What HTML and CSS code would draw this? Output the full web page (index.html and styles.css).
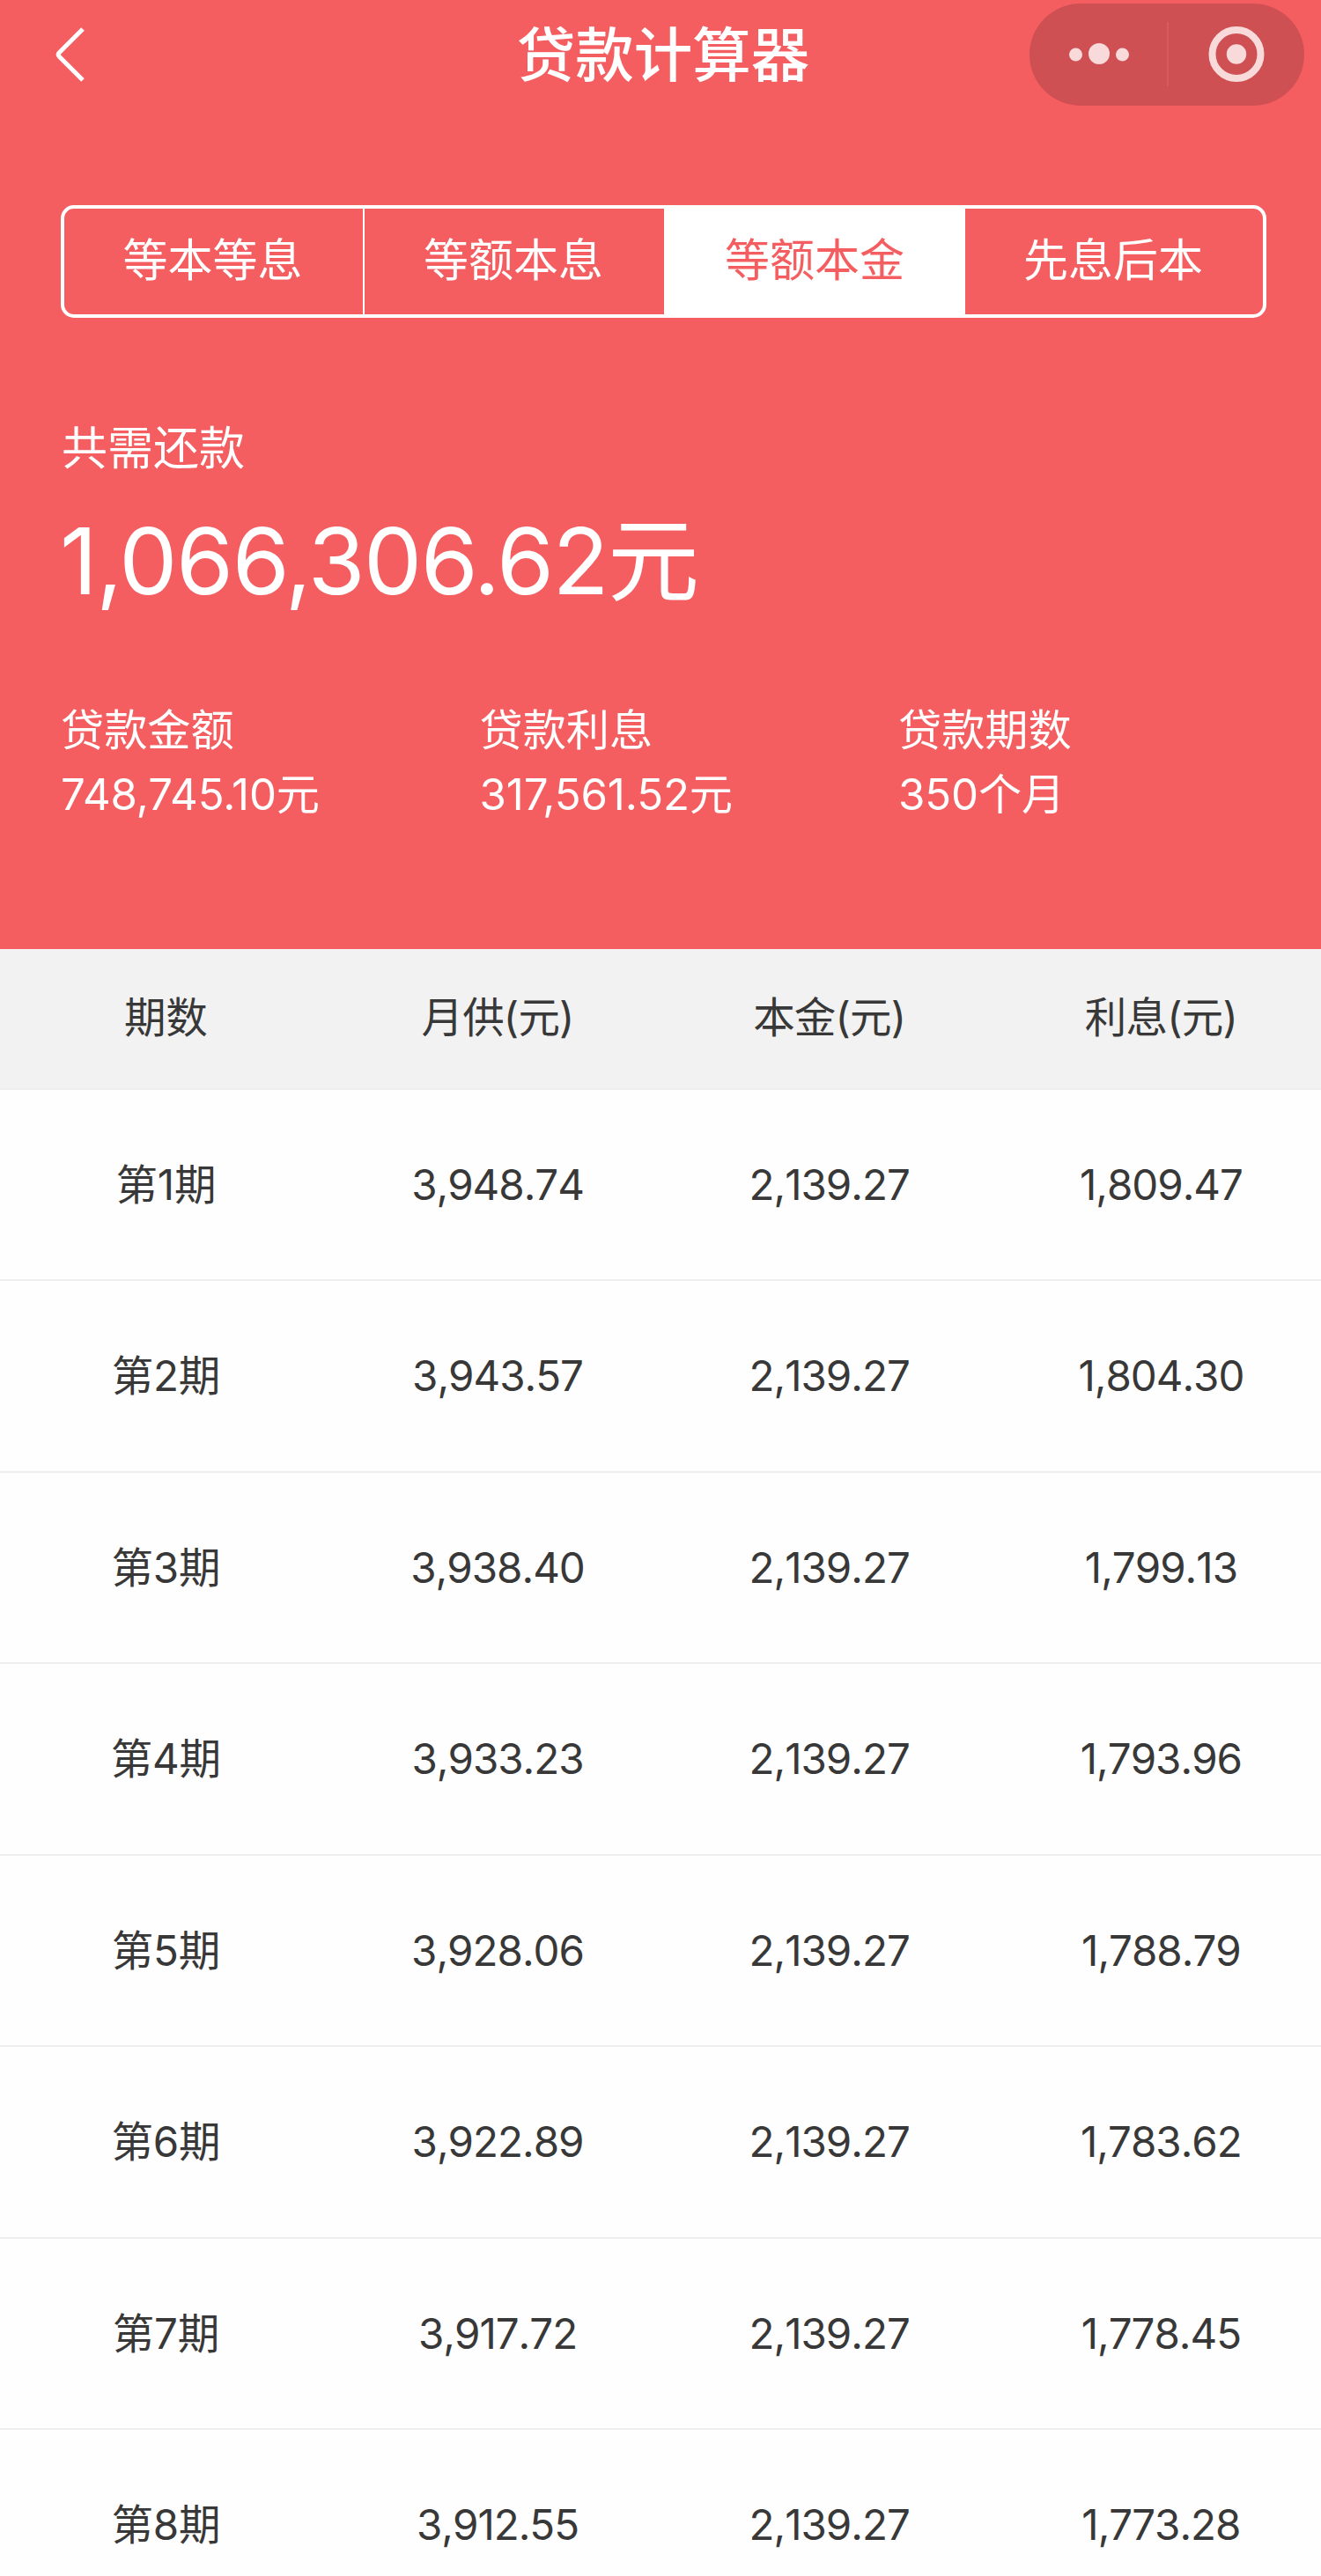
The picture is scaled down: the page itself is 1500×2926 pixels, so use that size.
FILE: index.html
```html
<!DOCTYPE html>
<html lang="zh-CN">
<head>
<meta charset="utf-8">
<title>贷款计算器</title>
<link rel="stylesheet" href="styles.css">
</head>
<body>
<header class="hero">
  <nav class="navbar">
    <svg class="back" width="36" height="64" viewBox="0 0 36 64" fill="none" stroke="#fff" stroke-width="5"><path d="M32 3 5.500 29.500Q3 32 5.500 34.500L32 61"/></svg>
    <h1 class="title">贷款计算器</h1>
    <div class="capsule">
      <svg width="312" height="116" viewBox="0 0 312 116">
        <g fill="#f8dadb"><circle cx="52.500" cy="58" r="7.500"/><circle cx="79" cy="57" r="12"/><circle cx="105.500" cy="58" r="7.500"/><circle cx="235" cy="57.500" r="11.200"/></g>
        <path d="M157 21v73" stroke="#da5b5d" stroke-width="2"/>
        <circle cx="235" cy="57.500" r="27.500" fill="none" stroke="#f8dadb" stroke-width="8"/>
      </svg>
    </div>
  </nav>
  <div class="tabs">
    <div class="tab">等本等息</div>
    <div class="tab">等额本息</div>
    <div class="tab active">等额本金</div>
    <div class="tab">先息后本</div>
  </div>
  <div class="total-label">共需还款</div>
  <div class="total">1,066,306.62<span class="unit">元</span></div>
  <div class="stats">
    <div class="stat"><div>贷款金额</div><div class="value">748,745.10元</div></div>
    <div class="stat"><div>贷款利息</div><div class="value">317,561.52元</div></div>
    <div class="stat"><div>贷款期数</div><div class="value">350个月</div></div>
  </div>
</header>
<main class="table">
  <div class="row head"><span>期数</span><span>月供(元)</span><span>本金(元)</span><span>利息(元)</span></div>
  <div class="row"><span>第1期</span><span>3,948.74</span><span>2,139.27</span><span>1,809.47</span></div>
  <div class="row"><span>第2期</span><span>3,943.57</span><span>2,139.27</span><span>1,804.30</span></div>
  <div class="row"><span>第3期</span><span>3,938.40</span><span>2,139.27</span><span>1,799.13</span></div>
  <div class="row"><span>第4期</span><span>3,933.23</span><span>2,139.27</span><span>1,793.96</span></div>
  <div class="row"><span>第5期</span><span>3,928.06</span><span>2,139.27</span><span>1,788.79</span></div>
  <div class="row"><span>第6期</span><span>3,922.89</span><span>2,139.27</span><span>1,783.62</span></div>
  <div class="row"><span>第7期</span><span>3,917.72</span><span>2,139.27</span><span>1,778.45</span></div>
  <div class="row"><span>第8期</span><span>3,912.55</span><span>2,139.27</span><span>1,773.28</span></div>
</main>
</body>
</html>
```
FILE: styles.css
```css
* { box-sizing: border-box; }
body {
  margin: 0;
  height: 2926px;
  overflow: hidden;
  background: #fefefe;
  color: #383838;
  font-family: Inter, "Noto Sans CJK SC", sans-serif;
}
.hero {
  height: 1077.5px;
  padding-top: 4px;
  background: #f55e60;
  color: #fff;
}
.navbar {
  display: grid;
  grid-template-columns: 312px 1fr 312px;
  align-items: center;
  height: 116px;
  padding: 0 19px;
}
.back { margin-left: 43px; }
.title {
  margin: 0;
  padding: 2px 0 0 6px;
  text-align: center;
  font-size: 66.5px;
  line-height: 80px;
  font-weight: 500;
}
.capsule {
  height: 116px;
  border-radius: 58px;
  background: #cf5052;
}
.capsule svg { display: block; }
.tabs {
  display: grid;
  grid-template-columns: 339px 342px 342px 1fr;
  height: 128px;
  margin: 113px 62px 0 69px;
  border: 4px solid #fff;
  border-radius: 15px;
  overflow: hidden;
}
.tab {
  padding-right: 2px;
  border-left: 2px solid #fff;
  text-align: center;
  font-size: 51px;
  line-height: 118px;
}
.tab:first-child, .tab:last-child { border-left: 0; }
.tab.active { background: #fff; color: #f55e60; }
.total-label {
  margin: 119px 0 0 70px;
  font-size: 52px;
  line-height: 60px;
}
.total {
  margin: 35px 0 0 68px;
  font-size: 105px;
  line-height: 124px;
  letter-spacing: -1.5px;
}
.unit { font-size: 104px; }
.stats {
  display: grid;
  grid-template-columns: repeat(3, 475.5px);
  margin: 94px 0 0 69px;
  font-size: 49.2px;
  line-height: 73px;
}
.value { letter-spacing: -0.1px; }
.row {
  display: grid;
  grid-template-columns: repeat(4, 376.7px);
  height: 217.5px;
  border-bottom: 2px solid #eee;
  text-align: center;
  font-size: 47.5px;
  line-height: 215px;
  letter-spacing: -1px;
  font-kerning: none;
}
.row span:first-child { letter-spacing: -0.2px; }
.row.head {
  height: 160px;
  background: #f2f2f2;
  line-height: 156px;
  letter-spacing: -0.8px;
}
```
